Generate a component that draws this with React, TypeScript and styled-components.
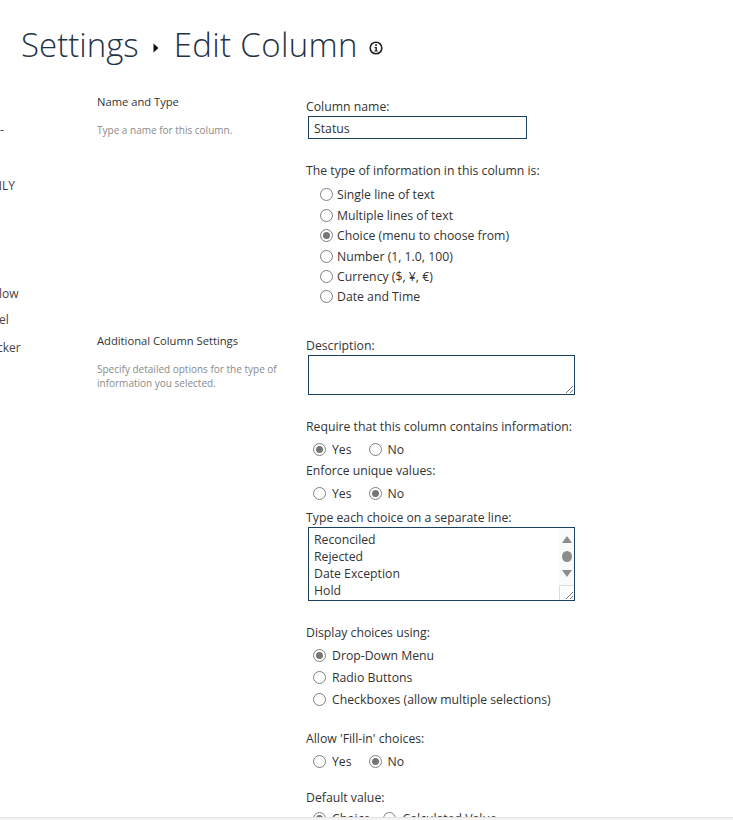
import React from 'react';
import styled, { createGlobalStyle } from 'styled-components';

const navItems = [
  { text: '-', top: 0, left: 0 },
  { text: 'NLY', top: 44, left: -7 },
  { text: 'low', top: 96, left: -1 },
  { text: 'el', top: 14, left: -1 },
  { text: 'cker', top: 16, left: -3 },
];

const typeOptions = [
  { label: 'Single line of text' },
  { label: 'Multiple lines of text' },
  { label: 'Choice (menu to choose from)', checked: true },
  { label: 'Number (1, 1.0, 100)' },
  { label: 'Currency ($, ¥, €)' },
  { label: 'Date and Time' },
];

const displayOptions = [
  { label: 'Drop-Down Menu', checked: true },
  { label: 'Radio Buttons' },
  { label: 'Checkboxes (allow multiple selections)' },
];

const choices = ['Reconciled', 'Rejected', 'Date Exception', 'Hold'];

const Grip = () => (
  <GripIcon viewBox="0 0 10 10">
    <path d="M9 2 2 9M9 6 6 9" stroke="#777" strokeWidth="1" fill="none" />
  </GripIcon>
);

const Radio = ({ label, checked }: { label: string; checked?: boolean }) => (
  <RadioLabel>
    <RadioInput type="radio" checked={!!checked} readOnly />
    {label}
  </RadioLabel>
);

const App = () => (
  <>
    <GlobalStyle />
    <Page>
      <Title>
        <span>Settings</span>
        <Crumb viewBox="0 0 6 10">
          <path d="M0.5 0.5 5.5 5 0.5 9.5Z" fill="#111" />
        </Crumb>
        <TitleLeaf>Edit Column</TitleLeaf>
        <InfoIcon viewBox="0 0 14 14">
          <circle cx="7" cy="7" r="5.8" fill="none" stroke="#222" strokeWidth="1.6" />
          <rect x="6.2" y="3.2" width="1.7" height="1.7" fill="#222" />
          <path d="M5.6 6h2.3v3.6h.9v1H5.4v-1h1V7H5.6Z" fill="#222" />
        </InfoIcon>
      </Title>
      <Body>
        <Nav>
          {navItems.map(item => (
            <NavItem key={item.text} $top={item.top} $left={item.left}>
              {item.text}
            </NavItem>
          ))}
        </Nav>
        <Sections>
          <Section $height={239}>
            <Aside>
              <AsideTitle>Name and Type</AsideTitle>
              <AsideText>Type a name for this column.</AsideText>
            </Aside>
            <Fields>
              <Label>Column name:</Label>
              <TextInput value="Status" readOnly />
              <Label $top={23}>The type of information in this column is:</Label>
              <TypeList>
                {typeOptions.map(option => (
                  <Radio key={option.label} {...option} />
                ))}
              </TypeList>
            </Fields>
          </Section>
          <Section>
            <Aside>
              <AsideTitle>Additional Column Settings</AsideTitle>
              <AsideText>Specify detailed options for the type of information you selected.</AsideText>
            </Aside>
            <Fields>
              <Label>Description:</Label>
              <Box $height={40}>
                <BoxGrip>
                  <Grip />
                </BoxGrip>
              </Box>
              <Label $top={23}>Require that this column contains information:</Label>
              <InlineRadios>
                <Radio label="Yes" checked />
                <Radio label="No" />
              </InlineRadios>
              <Label>Enforce unique values:</Label>
              <InlineRadios>
                <Radio label="Yes" />
                <Radio label="No" checked />
              </InlineRadios>
              <Label $top={3}>Type each choice on a separate line:</Label>
              <Box $height={74}>
                {choices.map(choice => (
                  <Choice key={choice}>{choice}</Choice>
                ))}
                <Scrollbar>
                  <ArrowUp />
                  <Thumb />
                  <ArrowDown />
                </Scrollbar>
                <Corner>
                  <Grip />
                </Corner>
              </Box>
              <Label $top={23}>Display choices using:</Label>
              <DisplayList>
                {displayOptions.map(option => (
                  <Radio key={option.label} {...option} />
                ))}
              </DisplayList>
              <Label $top={22}>Allow 'Fill-in' choices:</Label>
              <InlineRadios>
                <Radio label="Yes" />
                <Radio label="No" checked />
              </InlineRadios>
              <Label $top={15}>Default value:</Label>
              <InlineRadios $gap={13} $top={4}>
                <Radio label="Choice" checked />
                <Radio label="Calculated Value" />
              </InlineRadios>
            </Fields>
          </Section>
        </Sections>
      </Body>
      <BottomLine />
    </Page>
  </>
);

const GlobalStyle = createGlobalStyle`
  html, body {
    margin: 0;
    height: 100%;
    overflow: hidden;
    background: #fff;
  }
  body {
    font-family: "Open Sans", "Noto Sans", sans-serif;
    font-size: 12px;
    color: #333;
  }
`;

const Page = styled.div`
  position: relative;
  width: 733px;
  height: 820px;
  overflow: hidden;
`;

const Title = styled.h1`
  display: flex;
  align-items: center;
  margin: 0;
  padding: 21px 0 0 21px;
  height: 47px;
  font-size: 33px;
  font-weight: 300;
  line-height: 47px;
  color: #1f3347;
`;

const TitleLeaf = styled.span`
  letter-spacing: 0.35px;
`;

const Crumb = styled.svg`
  width: 6px;
  height: 10px;
  margin: 7px 15px 0 14px;
`;

const InfoIcon = styled.svg`
  width: 14px;
  height: 14px;
  margin: 6px 0 0 11px;
`;

const Body = styled.div`
  display: flex;
  padding-top: 26px;
`;

const Nav = styled.div`
  width: 97px;
  flex: none;
  padding-top: 30px;
  overflow: hidden;
`;

const NavItem = styled.div<{ $top: number; $left: number }>`
  margin-top: ${p => p.$top}px;
  margin-left: ${p => p.$left}px;
  height: 12px;
  line-height: 12px;
  font-size: 12px;
  color: #444;
`;

const Sections = styled.div`
  flex: 1;
`;

const Section = styled.section<{ $height?: number }>`
  display: flex;
  ${p => (p.$height ? `height: ${p.$height}px;` : '')}
`;

const Aside = styled.div`
  width: 209px;
  flex: none;
`;

const AsideTitle = styled.div`
  font-size: 11.2px;
  line-height: 16px;
  color: #333;
`;

const AsideText = styled.div`
  width: 190px;
  margin-top: 13px;
  font-size: 10px;
  line-height: 14px;
  color: #8a8a8a;
`;

const Fields = styled.div`
  display: flex;
  flex-direction: column;
  align-items: flex-start;
  flex: 1;
  padding-top: 4px;
`;

const Label = styled.div<{ $top?: number }>`
  margin-top: ${p => p.$top ?? 0}px;
  font-size: 12.25px;
  line-height: 17px;
  color: #333;
`;

const TextInput = styled.input`
  box-sizing: border-box;
  width: 219px;
  height: 23px;
  margin: 1px 0 0 2px;
  padding: 1px 5px 0;
  border: 1px solid #1c4060;
  font: inherit;
  font-size: 12.25px;
  color: #333;
  outline: none;
`;

const TypeList = styled.div`
  display: flex;
  flex-direction: column;
  gap: 3.4px;
  margin: 7.4px 0 0 14px;
`;

const RadioLabel = styled.label`
  display: flex;
  align-items: center;
  height: 17px;
  font-size: 12.25px;
  color: #333;
  white-space: nowrap;
`;

const RadioInput = styled.input`
  appearance: none;
  box-sizing: border-box;
  flex: none;
  position: relative;
  width: 13px;
  height: 13px;
  margin: 0 4px 0 0;
  border: 1px solid #808080;
  border-radius: 50%;
  background: #fff;
  &:checked::after {
    content: '';
    position: absolute;
    inset: 2px;
    border-radius: 50%;
    background: #767676;
  }
`;

const InlineRadios = styled.div<{ $gap?: number; $top?: number }>`
  display: flex;
  gap: ${p => p.$gap ?? 17}px;
  margin: ${p => p.$top ?? 6}px 0 4px 7px;
  ${RadioInput} {
    margin-right: 6px;
  }
`;

const DisplayList = styled.div`
  display: flex;
  flex-direction: column;
  gap: 5px;
  margin: 6px 0 0 7px;
  ${RadioInput} {
    margin-right: 6px;
  }
`;

const Box = styled.div<{ $height: number }>`
  position: relative;
  box-sizing: border-box;
  width: 267px;
  height: ${p => p.$height}px;
  margin: 1px 0 0 2px;
  padding: 3px 5px;
  border: 1px solid #1c4060;
`;

const Choice = styled.div`
  font-size: 12.25px;
  line-height: 17px;
  color: #333;
`;

const Scrollbar = styled.div`
  position: absolute;
  top: 0;
  right: 0;
  bottom: 15px;
  display: flex;
  flex-direction: column;
  align-items: center;
  gap: 8px;
  box-sizing: border-box;
  width: 15px;
  padding-top: 8px;
  background: #fafafa;
`;

const ArrowUp = styled.div`
  width: 0;
  height: 0;
  border-left: 5px solid transparent;
  border-right: 5px solid transparent;
  border-bottom: 7px solid #8c8c8c;
`;

const ArrowDown = styled.div`
  width: 0;
  height: 0;
  border-left: 5px solid transparent;
  border-right: 5px solid transparent;
  border-top: 7px solid #8c8c8c;
`;

const Thumb = styled.div`
  width: 10px;
  height: 11px;
  border-radius: 50%;
  background: #8c8c8c;
`;

const Corner = styled.div`
  position: absolute;
  right: 0;
  bottom: 0;
  width: 15px;
  height: 15px;
  box-sizing: border-box;
  border: 1px solid #ddd;
  border-width: 1px 0 0 1px;
`;

const BoxGrip = styled.div`
  position: absolute;
  right: 0;
  bottom: 0;
  width: 10px;
  height: 10px;
`;

const GripIcon = styled.svg`
  position: absolute;
  right: 0;
  bottom: 0;
  width: 10px;
  height: 10px;
`;

const BottomLine = styled.div`
  position: absolute;
  left: 0;
  right: 0;
  bottom: 0;
  box-sizing: border-box;
  height: 3px;
  border-top: 1px solid #e2e2e2;
  background: #f3f3f3;
`;

export default App;
